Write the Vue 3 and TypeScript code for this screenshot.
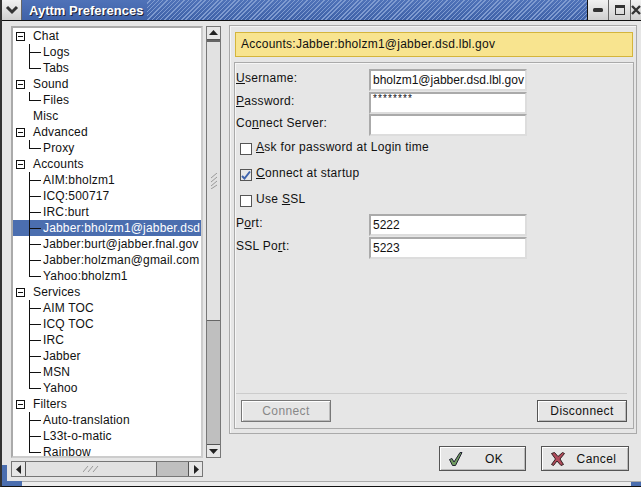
<script setup lang="ts">
type Row = { text: string; kind: 'parent' | 'leaf' | 'child' | 'last'; selected?: boolean }
const group = (title: string, items: string[]): Row[] => [
  { text: title, kind: items.length ? 'parent' : 'leaf' },
  ...items.map((text, i): Row => ({ text, kind: i === items.length - 1 ? 'last' : 'child' }))
]
const rows: Row[] = [
  ...group('Chat', ['Logs', 'Tabs']),
  ...group('Sound', ['Files']),
  ...group('Misc', []),
  ...group('Advanced', ['Proxy']),
  ...group('Accounts', ['AIM:bholzm1', 'ICQ:500717', 'IRC:burt', 'Jabber:bholzm1@jabber.dsd.lbl.gov', 'Jabber:burt@jabber.fnal.gov', 'Jabber:holzman@gmail.com', 'Yahoo:bholzm1']),
  ...group('Services', ['AIM TOC', 'ICQ TOC', 'IRC', 'Jabber', 'MSN', 'Yahoo']),
  ...group('Filters', ['Auto-translation', 'L33t-o-matic', 'Rainbow'])
]
rows.forEach(r => { if (r.text.startsWith('Jabber:bholzm1')) r.selected = true })
</script>

<template>
  <div class="window">
    <header class="titlebar">
      <div class="wbtn menu"><svg width="14" height="10" viewBox="0 0 14 10"><path d="M2 2 L7 7 L12 2" fill="none" stroke="#333" stroke-width="3"/></svg></div>
      <div class="title"><span>Ayttm Preferences</span><div class="hatch"></div></div>
      <div class="wbtn min"><svg width="12" height="6" viewBox="0 0 12 6"><rect x="1" y="1" width="10" height="4" rx="1.5" fill="#333"/></svg></div>
      <div class="wbtn max"><svg width="12" height="12" viewBox="0 0 12 12"><rect x="1.5" y="1.5" width="9" height="9" fill="none" stroke="#333"/><rect x="1" y="1" width="10" height="3" fill="#333"/></svg></div>
      <div class="wbtn close"><svg width="10" height="10" viewBox="0 0 10 10"><path d="M1 1 L9 9 M9 1 L1 9" stroke="#333" stroke-width="2.4"/></svg></div>
    </header>
    <div class="content">
      <aside class="side">
        <div class="side-top">
          <div class="tree">
            <div v-for="r in rows" :key="r.text" class="row" :class="{ selected: r.selected }">
              <template v-if="r.kind === 'parent' || r.kind === 'leaf'">
                <span class="expander"><i v-if="r.kind === 'parent'" class="minus"></i></span>
                <span class="label">{{ r.text }}</span>
              </template>
              <template v-else>
                <span class="branch" :class="{ last: r.kind === 'last' }"></span>
                <span class="label">{{ r.text }}</span>
              </template>
            </div>
          </div>
          <div class="vbar">
            <div class="sb-btn"><svg width="9" height="6" viewBox="0 0 9 6"><path d="M4.5 0 L9 5 H0 Z" fill="#222"/></svg></div>
            <div class="vthumb"><svg width="8" height="16" viewBox="0 0 8 16"><path d="M1 5 L7 0 M1 9 L7 4 M1 13 L7 8 M1 16 L7 12" stroke="#999" fill="none"/></svg></div>
            <div class="vtrough"></div>
            <div class="sb-btn"><svg width="9" height="6" viewBox="0 0 9 6"><path d="M4.5 6 L9 1 H0 Z" fill="#222"/></svg></div>
          </div>
        </div>
        <div class="hbar">
          <div class="sb-btn h"><svg width="6" height="9" viewBox="0 0 6 9"><path d="M0 4.5 L5 0 V9 Z" fill="#222"/></svg></div>
          <div class="hthumb"><svg width="16" height="8" viewBox="0 0 16 8"><path d="M0 7 L5 1 M5 7 L10 1 M10 7 L15 1" stroke="#999" fill="none"/></svg></div>
          <div class="htrough"></div>
          <div class="sb-btn h"><svg width="6" height="9" viewBox="0 0 6 9"><path d="M6 4.5 L1 0 V9 Z" fill="#222"/></svg></div>
        </div>
      </aside>
      <main class="pane">
        <section class="outer">
          <div class="banner">Accounts:Jabber:bholzm1@jabber.dsd.lbl.gov</div>
          <div class="frame">
            <div class="fields">
              <label class="field"><span><u>U</u>sername:</span><span class="input">bholzm1@jabber.dsd.lbl.gov</span></label>
              <label class="field"><span><u>P</u>assword:</span><span class="input pass">********</span></label>
              <label class="field tight"><span>Co<u>n</u>nect Server:</span><span class="input"></span></label>
            </div>
            <div class="checks">
              <div class="check"><span class="box"></span><span class="check-text"><u>A</u>sk for password at Login time</span></div>
              <div class="check"><span class="box on"><svg width="10" height="10" viewBox="0 0 10 10"><path d="M1 6 L3.5 8.5 L9 1.5" fill="none" stroke="#3f64ad" stroke-width="2"/></svg></span><span class="check-text"><u>C</u>onnect at startup</span></div>
              <div class="check"><span class="box"></span><span class="check-text">Use <u>S</u>SL</span></div>
            </div>
            <div class="fields">
              <label class="field"><span>P<u>o</u>rt:</span><span class="input">5222</span></label>
              <label class="field"><span>SSL Po<u>r</u>t:</span><span class="input">5223</span></label>
            </div>
            <div class="spacer"></div>
            <div class="actions">
              <button class="btn disabled">Connect</button>
              <button class="btn">Disconnect</button>
            </div>
          </div>
        </section>
        <footer class="dialog-actions">
          <button class="btn big">
            <svg width="14" height="14" viewBox="0 0 14 14"><path d="M0.5 7.5 L3 6.5 L5 10 L11 0.5 L13 0.5 L6.5 13.5 L3.5 13.5 Z" fill="#6f9a5f" stroke="#223" stroke-width="1"/></svg>
            <span>OK</span>
          </button>
          <button class="btn big cancel">
            <svg width="14" height="14" viewBox="0 0 14 14"><path d="M0.5 1.5 L3.5 0.5 L7 4.5 L11.5 0.5 L13.5 1.5 L9 7 L12.5 12.5 L10 13.5 L6 9 L2.5 13.5 L0.5 12.5 L4.5 7 Z" fill="#b04a5a" stroke="#322" stroke-width="1"/></svg>
            <span>Cancel</span>
          </button>
        </footer>
      </main>
    </div>
    <div class="bottom-edge"></div>
    <i class="corner-l v"></i><i class="corner-l h"></i><i class="corner-r"></i>
  </div>
</template>

<style>
html, body { margin: 0; padding: 0; background: #000; overflow: hidden; }
</style>

<style scoped>
.window { width: 641px; height: 487px; display: flex; flex-direction: column; box-sizing: border-box; font: 12px/16px "Liberation Sans", Arial, sans-serif; color: #111; background: #e6e6e6; overflow: hidden; position: relative; border-left: 2px solid #333; border-bottom: 1px solid #111; }
.titlebar { height: 21px; display: flex; flex: none; background: #111; box-sizing: border-box; border-bottom: 1px solid #111; }
.title { flex: 1; background: linear-gradient(#4f72b8, #3f62a8); color: #fff; font-weight: 700; font-size: 13px; line-height: 22px; padding-left: 7px; display: flex; overflow: hidden; margin-right: 1px; }
.title span { text-shadow: 1px 1px 0 #223; flex: none; }
.hatch { flex: 1; margin-left: 4px; background: repeating-linear-gradient(135deg, transparent 0 2px, #7f9bd0 2px 3px); }
.wbtn { width: 20px; flex: none; background: linear-gradient(#f2f2f2, #cfcfcf); display: flex; align-items: center; justify-content: center; border-right: 1px solid #666; box-sizing: border-box; }
.wbtn.min { width: 21px; }
.wbtn.max { width: 22px; }
.wbtn.close { width: 10px; border-right: none; justify-content: flex-start; }
.content { height: 460px; flex: none; box-sizing: border-box; display: flex; padding: 4px 4px 0 9px; gap: 8px; }
.side { width: 210px; flex: none; display: flex; flex-direction: column; margin-top: 1px; }
.side-top { height: 432px; display: flex; gap: 3px; flex: none; }
.tree { width: 192px; box-sizing: border-box; border: 2px solid; border-color: #aaa #ccc #ccc #aaa; background: #fff; overflow: hidden; flex: none; }
.row { height: 16px; display: flex; align-items: stretch; white-space: nowrap; letter-spacing: .17px; padding-left: 1px; }
.row.selected { background: #4b6eaf; color: #fff; margin-right: 0; }
.expander { width: 19px; flex: none; display: flex; align-items: center; }
.minus { display: block; box-sizing: border-box; width: 9px; height: 9px; margin-left: 2px; border: 1px solid #111; position: relative; }
.minus::after { content: ""; position: absolute; left: 1px; right: 1px; top: 3px; height: 1px; background: #111; }
.branch { width: 13px; margin-left: 15px; margin-right: 1px; position: relative; flex: none; }
.branch::before { content: ""; position: absolute; left: 0; top: 0; bottom: 0; width: 1px; background: #111; }
.branch.last::before { bottom: 8px; }
.branch::after { content: ""; position: absolute; left: 0; right: 1px; top: 8px; height: 1px; background: #111; }
.vbar { width: 15px; flex: none; display: flex; flex-direction: column; background: #bfbfbf; box-sizing: border-box; border: 1px solid #777; }
.sb-btn { height: 13px; flex: none; background: #e6e6e6; box-sizing: border-box; display: flex; align-items: center; justify-content: center; border-bottom: 1px solid #555; }
.sb-btn:last-child { border-bottom: 0; border-top: 1px solid #555; }
.sb-btn.h { width: 14px; height: auto; border: 0; border-right: 1px solid #555; }
.sb-btn.h:last-child { border: 0; border-left: 1px solid #555; }
.vthumb { height: 281px; flex: none; background: #e2e2e2; border-top: 2px solid #666; border-bottom: 1px solid #666; box-sizing: border-box; display: flex; align-items: center; justify-content: center; }
.vtrough { flex: 1; background: #bfbfbf; }
.hbar { width: 192px; height: 16px; margin-top: 3px; display: flex; background: #bfbfbf; box-sizing: border-box; border: 1px solid #777; flex: none; }
.hthumb { width: 131px; background: #e2e2e2; border-right: 1px solid #666; box-sizing: border-box; display: flex; align-items: center; justify-content: center; flex: none; }
.htrough { flex: 1; }
.pane { flex: 1; min-width: 0; display: flex; flex-direction: column; }
.outer { height: 409px; box-sizing: border-box; border: 1px solid #aaa; box-shadow: inset 1px 1px 0 #f6f6f6; padding: 6px 2px 4px 4px; display: flex; flex-direction: column; flex: none; }
.banner { margin: 0 1px 5px; height: 25px; box-sizing: border-box; border: 1px solid #d4b53c; background: #f8e48f; line-height: 23px; padding-left: 5px; letter-spacing: .25px; flex: none; }
.frame { flex: 1; min-height: 0; box-sizing: border-box; border: 1px solid #aaa; box-shadow: inset 1px 1px 0 #f6f6f6; padding: 6px 6px 6px 1px; display: flex; flex-direction: column; letter-spacing: .3px; }
.fields { display: flex; flex-direction: column; gap: 1px; }
.field { display: flex; height: 22px; justify-content: space-between; width: 291px; flex: none; }
.field.tight { margin-top: -1px; }
.field > span:first-child { line-height: 18px; }
.input { width: 158px; height: 22px; box-sizing: border-box; border: 2px solid #aaa; border-right-color: #ddd; border-bottom-color: #ddd; background: #fff; padding-left: 2px; line-height: 18px; overflow: hidden; white-space: nowrap; display: block; letter-spacing: 0; }
.pass { font-size: 10px; line-height: 10px; letter-spacing: 1.1px; }
.checks { display: flex; flex-direction: column; }
.check { height: 26px; display: flex; align-items: center; gap: 4px; padding-left: 4px; }
.check-text { margin-bottom: 4px; }
.box { width: 12px; height: 12px; box-sizing: border-box; border: 1px solid #555; background: #fff; display: flex; align-items: center; justify-content: center; }
.box.on { background: #e8e8e8; }
.spacer { flex: 1; }
.actions { display: flex; justify-content: space-between; padding: 6px 0 0 5px; border-top: 1px solid #ccc; }
.btn { width: 90px; height: 22px; padding: 0; box-sizing: border-box; border: 1px solid #555; box-shadow: inset 1px 1px 0 #fff, inset -1px -1px 0 #bbb; background: #e6e6e6; font: 12px "Liberation Sans", Arial, sans-serif; letter-spacing: .4px; color: #111; }
.btn.disabled { color: #888; border-color: #777; }
.dialog-actions { display: flex; justify-content: flex-end; gap: 15px; margin-top: 12px; padding-right: 8px; }
.btn.big { width: 87px; height: 25px; display: flex; align-items: center; padding-left: 9px; }
.btn.big span { flex: 1; text-align: center; }
.btn.cancel { width: 88px; }
.bottom-edge { flex: 1; background: linear-gradient(#aaa 0 1px, #ececec 1px); }
.corner-l, .corner-r { position: absolute; background: #4b6eaf; display: block; }
.corner-l.v { left: 0; top: 465px; width: 5px; height: 21px; }
.corner-l.h { left: 0; top: 481px; width: 20px; height: 5px; }
.corner-r { right: 0; top: 482px; width: 10px; height: 4px; }
</style>
